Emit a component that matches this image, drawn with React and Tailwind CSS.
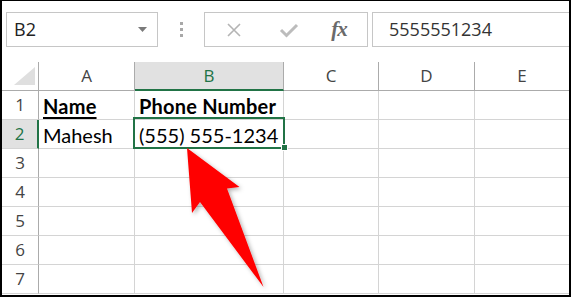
import React from "react";

const cols = [
  { label: "A", w: "w-[96px]" },
  { label: "B", w: "w-[149px]", active: true },
  { label: "C", w: "w-[95px]" },
  { label: "D", w: "w-[96px]" },
  { label: "E", w: "flex-1" },
];

const rows = [
  ["Name", "Phone Number"],
  ["Mahesh", "(555) 555-1234"],
  [],
  [],
  [],
  [],
  [],
];

function Toolbar() {
  return (
    <div className="flex items-start h-[61px] pt-[11px] pl-[4px]">
      {/* Name box */}
      <div className="w-[152px] h-[35px] border border-[#c6c6c6] flex items-center pl-[7px] pr-[10px]">
        <span className="text-[18px] text-[#222] font-['Open_Sans',sans-serif] flex-1">B2</span>
        <svg width="9" height="5" viewBox="0 0 9 5">
          <path d="M0 0 L9 0 L4.5 5 Z" fill="#7a7a7a" />
        </svg>
      </div>
      <div className="w-[46px] h-[35px] flex flex-col items-center justify-center gap-[3px]">
        <div className="w-[3px] h-[3px] bg-[#a8a8a8]" />
        <div className="w-[3px] h-[3px] bg-[#a8a8a8]" />
        <div className="w-[3px] h-[3px] bg-[#a8a8a8]" />
      </div>
      {/* Formula buttons */}
      <div className="w-[164px] h-[35px] border border-[#c6c6c6] flex items-center">
        <div className="w-[56px] flex justify-center pl-[2px]">
          <svg width="16" height="16" viewBox="0 0 16 16">
            <path d="M2 2 L14 14 M14 2 L2 14" stroke="#b4b4b4" strokeWidth="1.6" />
          </svg>
        </div>
        <div className="w-[56px] flex justify-center">
          <svg width="20" height="16" viewBox="0 0 20 16">
            <path d="M2 8 L7.5 13.5 L18 3" stroke="#bcbcbc" strokeWidth="3" fill="none" />
          </svg>
        </div>
        <div className="flex-1 flex justify-center pr-[6px]">
          <span className="font-['Liberation_Serif',serif] italic font-bold text-[21px] text-[#6a6a6a] tracking-[-1px]">
            fx
          </span>
        </div>
      </div>
      {/* Formula bar */}
      <div className="ml-[4px] flex-1 h-[35px] border border-[#c6c6c6] border-r-0 flex items-center pl-[16px]">
        <span className="text-[18px] text-[#333] font-['Open_Sans',sans-serif]">5555551234</span>
      </div>
    </div>
  );
}

function Grid() {
  return (
    <div className="relative">
      {/* header row */}
      <div className="flex h-[29px]">
        <div className="w-[37px] border-r border-b border-[#ababab] relative">
          <svg className="absolute left-[12px] top-[5px]" width="22" height="18" viewBox="0 0 22 18">
            <path d="M21 0 L21 18 L0 18 Z" fill="#dfdfdf" />
          </svg>
        </div>
        {cols.map((c) => (
          <div
            key={c.label}
            className={`${c.w} flex items-center justify-center text-[17px] font-['Open_Sans',sans-serif] ${
              c.active
                ? "bg-[#e1e1e1] border-b-2 border-b-[#217346] border-r border-r-[#ababab] text-[#217346]"
                : "border-b border-r border-[#ababab] text-[#444]"
            } ${c.label === "E" ? "border-r-0" : ""}`}
          >
            {c.label}
          </div>
        ))}
      </div>
      {rows.map((r, i) => (
        <div key={i} className="flex h-[29px]">
          <div
            className={`w-[37px] flex items-center justify-center text-[17px] font-['Open_Sans',sans-serif] border-b border-[#d4d4d4] ${
              i === 1
                ? "bg-[#e1e1e1] text-[#217346] border-r-2 border-r-[#217346]"
                : "text-[#444] border-r border-r-[#ababab]"
            }`}
          >
            {i + 1}
          </div>
          {cols.map((c, j) => (
            <div
              key={c.label}
              className={`${c.w} border-b border-[#d4d4d4] ${c.label === "E" ? "" : "border-r"} flex items-center pl-[4px] pt-[1px] text-[20px] text-black font-['Lato',sans-serif] whitespace-nowrap ${
                i === 0 ? "font-bold underline underline-offset-[3px] decoration-[2px] tracking-[0.2px]" : ""
              }`}
            >
              {r[j] || ""}
            </div>
          ))}
        </div>
      ))}
      {/* active cell selection */}
      <div className="absolute left-[131px] top-[55px] w-[152px] h-[32px] border-2 border-[#217346]" />
      <div className="absolute left-[279px] top-[82px] w-[7px] h-[7px] bg-[#217346] border border-white" />
    </div>
  );
}

export default function App() {
  return (
    <div className="w-[571px] h-[297px] bg-white relative overflow-hidden">
      <div className="w-[571px] h-[297px] border-2 border-t-[1px] border-black overflow-hidden">
        <Toolbar />
        <Grid />
      </div>
      {/* pointer arrow */}
      <svg className="absolute left-0 top-0 pointer-events-none" width="571" height="297" viewBox="0 0 571 297">
        <defs>
          <filter id="sh" x="-20%" y="-20%" width="140%" height="140%">
            <feDropShadow dx="2" dy="2" stdDeviation="2" floodColor="#000" floodOpacity="0.3" />
          </filter>
        </defs>
        <path
          d="M187 148 L239.5 187 L227 188.5 L263.5 287 L200 202 L192 213 Z"
          fill="#ff0000"
          filter="url(#sh)"
        />
      </svg>
    </div>
  );
}
